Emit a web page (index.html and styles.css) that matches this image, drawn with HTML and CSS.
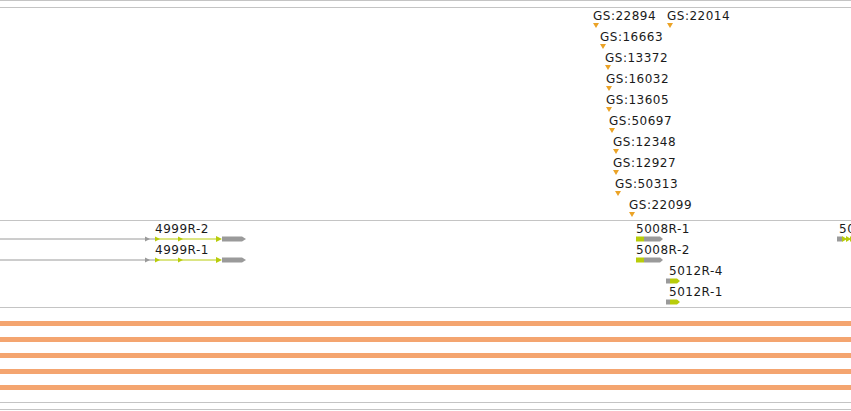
FILE: index.html
```html
<!DOCTYPE html>
<html lang="en">
<head>
    <meta charset="UTF-8">
    <title>Track view</title>
    <link rel="stylesheet" href="styles.css">
</head>
<body>
    <div class="browser">
        <div class="track ruler"></div>

        <!-- feature markers -->
        <div class="track markers">
            <div class="marker" style="left:593px; top:1px"><span>GS:22894</span><i></i></div>
            <div class="marker" style="left:667px; top:1px"><span>GS:22014</span><i></i></div>
            <div class="marker" style="left:600px; top:22px"><span>GS:16663</span><i></i></div>
            <div class="marker" style="left:605px; top:43px"><span>GS:13372</span><i></i></div>
            <div class="marker" style="left:606px; top:64px"><span>GS:16032</span><i></i></div>
            <div class="marker" style="left:606px; top:85px"><span>GS:13605</span><i></i></div>
            <div class="marker" style="left:609px; top:106px"><span>GS:50697</span><i></i></div>
            <div class="marker" style="left:613px; top:127px"><span>GS:12348</span><i></i></div>
            <div class="marker" style="left:613px; top:148px"><span>GS:12927</span><i></i></div>
            <div class="marker" style="left:615px; top:169px"><span>GS:50313</span><i></i></div>
            <div class="marker" style="left:629px; top:190px"><span>GS:22099</span><i></i></div>
        </div>

        <!-- transcripts -->
        <div class="track genes">
            <div class="transcript" style="left:0; top:1px">
                <span class="name" style="margin-left:155px">4999R-2</span>
                <svg width="247" height="6" viewBox="0 0 247 6">
                    <line x1="0" y1="3" x2="155" y2="3" class="intron"/>
                    <polygon points="145,0.5 150,3 145,5.5" class="grey"/>
                    <line x1="155" y1="3" x2="220" y2="3" class="intron-green"/>
                    <polygon points="155,0.5 160,3 155,5.5" class="green"/>
                    <polygon points="178,0.5 183,3 178,5.5" class="green"/>
                    <polygon points="216,0 222,3 216,6" class="green"/>
                    <polygon points="222,0.5 242,0.5 246,3 242,5.5 222,5.5" class="grey"/>
                </svg>
            </div>
            <div class="transcript" style="left:0; top:22px">
                <span class="name" style="margin-left:155px">4999R-1</span>
                <svg width="247" height="6" viewBox="0 0 247 6">
                    <line x1="0" y1="3" x2="155" y2="3" class="intron"/>
                    <polygon points="145,0.5 150,3 145,5.5" class="grey"/>
                    <line x1="155" y1="3" x2="220" y2="3" class="intron-green"/>
                    <polygon points="155,0.5 160,3 155,5.5" class="green"/>
                    <polygon points="178,0.5 183,3 178,5.5" class="green"/>
                    <polygon points="216,0 222,3 216,6" class="green"/>
                    <polygon points="222,0.5 242,0.5 246,3 242,5.5 222,5.5" class="grey"/>
                </svg>
            </div>

            <div class="transcript" style="left:636px; top:1px">
                <span class="name">5008R-1</span>
                <svg width="28" height="6" viewBox="0 0 28 6">
                    <rect x="0" y="0.5" width="8" height="5" class="green"/>
                    <polygon points="8,0.5 24,0.5 27,3 24,5.5 8,5.5" class="grey"/>
                </svg>
            </div>
            <div class="transcript" style="left:636px; top:22px">
                <span class="name">5008R-2</span>
                <svg width="28" height="6" viewBox="0 0 28 6">
                    <rect x="0" y="0.5" width="8" height="5" class="green"/>
                    <polygon points="8,0.5 24,0.5 27,3 24,5.5 8,5.5" class="grey"/>
                </svg>
            </div>
            <div class="transcript" style="left:666px; top:43px">
                <span class="name" style="margin-left:3px">5012R-4</span>
                <svg width="15" height="6" viewBox="0 0 15 6">
                    <rect x="0" y="0.5" width="4" height="5" class="grey"/>
                    <polygon points="4,0.5 11,0.5 14,3 11,5.5 4,5.5" class="green"/>
                </svg>
            </div>
            <div class="transcript" style="left:666px; top:64px">
                <span class="name" style="margin-left:3px">5012R-1</span>
                <svg width="15" height="6" viewBox="0 0 15 6">
                    <rect x="0" y="0.5" width="4" height="5" class="grey"/>
                    <polygon points="4,0.5 11,0.5 14,3 11,5.5 4,5.5" class="green"/>
                </svg>
            </div>

            <div class="transcript" style="left:837px; top:1px">
                <span class="name" style="margin-left:2px">5013R-1</span>
                <svg width="20" height="6" viewBox="0 0 20 6">
                    <rect x="0" y="0.5" width="5" height="5" class="grey"/>
                    <line x1="5" y1="3" x2="20" y2="3" class="intron-green"/>
                    <polygon points="5,0 10,3 5,6" class="green"/>
                    <polygon points="9,0 14,3 9,6" class="green"/>
                    <rect x="13" y="0.5" width="7" height="5" class="green"/>
                </svg>
            </div>
        </div>

        <!-- coverage bars -->
        <div class="track bars">
            <div class="bar"></div>
            <div class="bar"></div>
            <div class="bar"></div>
            <div class="bar"></div>
            <div class="bar"></div>
        </div>

        <div class="track spacer"></div>
        <div class="track spacer"></div>
    </div>
</body>
</html>
```

FILE: styles.css
```css
body {
    margin: 0;
    background: #ffffff;
    font-family: "DejaVu Sans", Verdana, sans-serif;
    font-size: 12px;
    color: #1a1a1a;
    overflow: hidden;
}

.browser {
    width: 851px;
    height: 411px;
    overflow: hidden;
}

.track {
    position: relative;
    border-top: 1px solid #c4c4c4;
}

.ruler {
    height: 6px;
}

.markers {
    height: 212px;
}

.genes {
    height: 86px;
}

.bars {
    height: 95px;
    box-sizing: border-box;
    padding-top: 13px;
    display: flex;
    flex-direction: column;
    gap: 11px;
}

.spacer {
    height: 6px;
}

.marker {
    position: absolute;
    display: flex;
    flex-direction: column;
    align-items: flex-start;
}

.marker span,
.transcript .name {
    line-height: 14px;
    letter-spacing: 0.5px;
    white-space: nowrap;
}

.marker i {
    width: 0;
    height: 0;
    border-left: 3px solid transparent;
    border-right: 3px solid transparent;
    border-top: 5px solid #eba327;
}

.transcript {
    position: absolute;
    display: flex;
    flex-direction: column;
    align-items: flex-start;
}

.transcript svg {
    display: block;
}

.intron {
    stroke: #9a9a9a;
    stroke-width: 1;
}

.intron-green {
    stroke: #b8cc0a;
    stroke-width: 1;
}

.grey {
    fill: #9a9a9a;
}

.green {
    fill: #b8cc0a;
}

.bar {
    height: 5px;
    background: #f4a570;
}
```
